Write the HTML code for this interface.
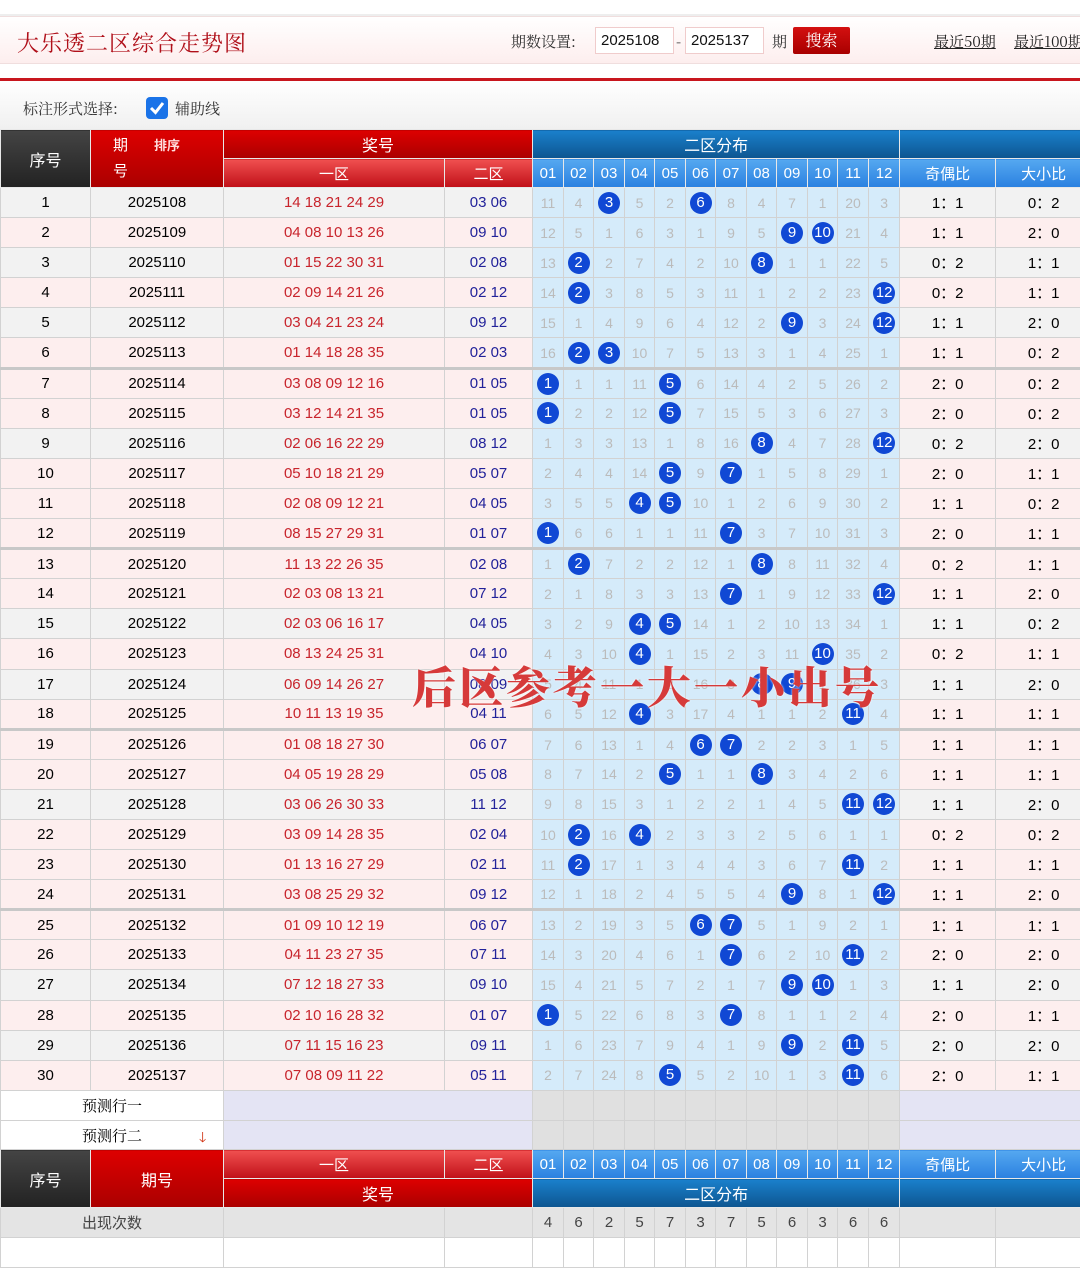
<!DOCTYPE html>
<html><head><meta charset="utf-8">
<style>
*{box-sizing:border-box;margin:0;padding:0}
html,body{width:1080px;height:1245px;overflow:hidden;background:#fff;font-family:"Liberation Sans","Noto Sans CJK SC",sans-serif}
.top{position:absolute;left:0;top:0;width:1080px;height:16px;border-bottom:2px solid #eee}
.hd{position:absolute;left:0;top:16px;width:1080px;height:48px;background:linear-gradient(#fff,#fdeeee);border-top:1px solid #f0dede;border-bottom:1px solid #f0dede}
.title{position:absolute;left:17px;top:27px;font-family:"Noto Serif CJK SC",serif;font-size:22px;color:#b0101a;letter-spacing:1px}
.lbl{position:absolute;top:31px;font-size:15px;color:#333;font-family:"Noto Serif CJK SC",serif}
.inp{position:absolute;top:27px;height:27px;width:79px;border:1px solid #f0cccc;background:#fff;font-size:15px;padding:4px 0 0 5px;color:#111}
.btn{position:absolute;left:793px;top:27px;width:57px;height:27px;background:linear-gradient(#d41010,#a80000);border-radius:2px;color:#fff;font-size:16px;text-align:center;line-height:26px;font-family:"Noto Serif CJK SC",serif}
.lnk{position:absolute;top:31px;font-size:15px;color:#222;text-decoration:underline;font-family:"Noto Serif CJK SC",serif;white-space:nowrap}
.redline{position:absolute;left:0;top:78px;width:1080px;height:3px;background:#c8161e}
.opt{position:absolute;left:0;top:81px;width:1080px;height:48px;background:linear-gradient(#fff,#f0f0f0)}
.opt span{position:absolute;top:17px;font-size:15px;color:#333;font-family:"Noto Serif CJK SC",serif}
.chk{position:absolute;left:146px;top:97px;width:22px;height:22px;background:#1a73e8;border-radius:4px}
table{position:absolute;left:0;border-collapse:collapse;table-layout:fixed;width:1083px}
td,th{border:1px solid #d2d2d2;text-align:center;font-weight:normal;font-size:15px;white-space:nowrap;overflow:hidden;padding:0}
#t{top:129px}
th{color:#fff;height:29px;border-color:#e8e8e8}
.dk{background:linear-gradient(#444,#222)}
.rd{background:linear-gradient(#d00,#a00)}
.rd2{background:linear-gradient(#f05050,#c01018)}
.bl{background:linear-gradient(#1a80cc,#0d5590)}
.bl2{background:linear-gradient(#55a8f0,#2a80e0)}
tr.r td{height:30.1px}
tr.r td:nth-child(3){color:#c8242c}
tr.r td:nth-child(4){color:#22229a}
td.d{background:#d5ebfa;color:#bbb;font-size:14px}
tr.p td{background:#fdeeee}
tr.g td{background:#f2f2f2}
tr.r td.d{background:#d5ebfa}
tr.s td{border-bottom:3px solid #c8c8c8}
i{display:inline-block;width:22px;height:22px;border-radius:50%;background:#1048d4;color:#fff;font-style:normal;line-height:22px;font-size:15px;vertical-align:middle}
.pr td{height:29.8px}
.w{background:#fff!important}
.lv{background:#e4e4f4}
.gy{background:#e0e0e0}
.cnt td{background:#e4e4e4;color:#444;height:30px}
.ov{position:absolute;left:412px;top:648px;font-family:"Noto Serif CJK SC",serif;font-weight:900;font-size:44px;color:#d63a3a;letter-spacing:3px;text-shadow:0 0 2px #fff;white-space:nowrap}
</style></head><body>
<div class="top"></div>
<div class="hd"></div>
<div class="title">大乐透二区综合走势图</div>
<div class="lbl" style="left:511px">期数设置:</div>
<div class="inp" style="left:595px">2025108</div>
<div class="lbl" style="left:676px">-</div>
<div class="inp" style="left:685px">2025137</div>
<div class="lbl" style="left:772px">期</div>
<div class="btn">搜索</div>
<div class="lnk" style="left:934px">最近50期</div>
<div class="lnk" style="left:1014px">最近100期</div>
<div class="redline"></div>
<div class="opt"><span style="left:23px">标注形式选择:</span><span style="left:175px">辅助线</span></div>
<div class="chk"><svg width="22" height="22"><path d="M5 11 L9.5 15.5 L17 6" stroke="#fff" stroke-width="3" fill="none"/></svg></div>
<table id="t">
<colgroup><col style="width:90px"><col style="width:133px"><col style="width:221px"><col style="width:88px"><col style="width:31px"><col style="width:30px"><col style="width:31px"><col style="width:30px"><col style="width:31px"><col style="width:30px"><col style="width:31px"><col style="width:30px"><col style="width:31px"><col style="width:30px"><col style="width:31px"><col style="width:31px"><col style="width:96px"><col style="width:96px"></colgroup>
<tr><th rowspan="2" class="dk" style="font-size:16px">序号</th><th rowspan="2" class="rd" style="font-size:15px;text-align:left;padding-left:22px;line-height:26px">期<span style="font-size:13px;color:#fdd;margin-left:26px;font-weight:bold">排序</span><br>号</th><th colspan="2" class="rd" style="font-size:16px">奖号</th><th colspan="12" class="bl" style="font-size:16px">二区分布</th><th colspan="2" class="bl"></th></tr>
<tr><th class="rd2">一区</th><th class="rd2">二区</th><th class="bl2">01</th><th class="bl2">02</th><th class="bl2">03</th><th class="bl2">04</th><th class="bl2">05</th><th class="bl2">06</th><th class="bl2">07</th><th class="bl2">08</th><th class="bl2">09</th><th class="bl2">10</th><th class="bl2">11</th><th class="bl2">12</th><th class="bl2">奇偶比</th><th class="bl2">大小比</th></tr>
<tr class="r g"><td>1</td><td>2025108</td><td>14 18 21 24 29</td><td>03 06</td><td class="d">11</td><td class="d">4</td><td class="d"><i>3</i></td><td class="d">5</td><td class="d">2</td><td class="d"><i>6</i></td><td class="d">8</td><td class="d">4</td><td class="d">7</td><td class="d">1</td><td class="d">20</td><td class="d">3</td><td>1：1</td><td>0：2</td></tr>
<tr class="r p"><td>2</td><td>2025109</td><td>04 08 10 13 26</td><td>09 10</td><td class="d">12</td><td class="d">5</td><td class="d">1</td><td class="d">6</td><td class="d">3</td><td class="d">1</td><td class="d">9</td><td class="d">5</td><td class="d"><i>9</i></td><td class="d"><i>10</i></td><td class="d">21</td><td class="d">4</td><td>1：1</td><td>2：0</td></tr>
<tr class="r g"><td>3</td><td>2025110</td><td>01 15 22 30 31</td><td>02 08</td><td class="d">13</td><td class="d"><i>2</i></td><td class="d">2</td><td class="d">7</td><td class="d">4</td><td class="d">2</td><td class="d">10</td><td class="d"><i>8</i></td><td class="d">1</td><td class="d">1</td><td class="d">22</td><td class="d">5</td><td>0：2</td><td>1：1</td></tr>
<tr class="r p"><td>4</td><td>2025111</td><td>02 09 14 21 26</td><td>02 12</td><td class="d">14</td><td class="d"><i>2</i></td><td class="d">3</td><td class="d">8</td><td class="d">5</td><td class="d">3</td><td class="d">11</td><td class="d">1</td><td class="d">2</td><td class="d">2</td><td class="d">23</td><td class="d"><i>12</i></td><td>0：2</td><td>1：1</td></tr>
<tr class="r g"><td>5</td><td>2025112</td><td>03 04 21 23 24</td><td>09 12</td><td class="d">15</td><td class="d">1</td><td class="d">4</td><td class="d">9</td><td class="d">6</td><td class="d">4</td><td class="d">12</td><td class="d">2</td><td class="d"><i>9</i></td><td class="d">3</td><td class="d">24</td><td class="d"><i>12</i></td><td>1：1</td><td>2：0</td></tr>
<tr class="r p s"><td>6</td><td>2025113</td><td>01 14 18 28 35</td><td>02 03</td><td class="d">16</td><td class="d"><i>2</i></td><td class="d"><i>3</i></td><td class="d">10</td><td class="d">7</td><td class="d">5</td><td class="d">13</td><td class="d">3</td><td class="d">1</td><td class="d">4</td><td class="d">25</td><td class="d">1</td><td>1：1</td><td>0：2</td></tr>
<tr class="r p"><td>7</td><td>2025114</td><td>03 08 09 12 16</td><td>01 05</td><td class="d"><i>1</i></td><td class="d">1</td><td class="d">1</td><td class="d">11</td><td class="d"><i>5</i></td><td class="d">6</td><td class="d">14</td><td class="d">4</td><td class="d">2</td><td class="d">5</td><td class="d">26</td><td class="d">2</td><td>2：0</td><td>0：2</td></tr>
<tr class="r p"><td>8</td><td>2025115</td><td>03 12 14 21 35</td><td>01 05</td><td class="d"><i>1</i></td><td class="d">2</td><td class="d">2</td><td class="d">12</td><td class="d"><i>5</i></td><td class="d">7</td><td class="d">15</td><td class="d">5</td><td class="d">3</td><td class="d">6</td><td class="d">27</td><td class="d">3</td><td>2：0</td><td>0：2</td></tr>
<tr class="r g"><td>9</td><td>2025116</td><td>02 06 16 22 29</td><td>08 12</td><td class="d">1</td><td class="d">3</td><td class="d">3</td><td class="d">13</td><td class="d">1</td><td class="d">8</td><td class="d">16</td><td class="d"><i>8</i></td><td class="d">4</td><td class="d">7</td><td class="d">28</td><td class="d"><i>12</i></td><td>0：2</td><td>2：0</td></tr>
<tr class="r p"><td>10</td><td>2025117</td><td>05 10 18 21 29</td><td>05 07</td><td class="d">2</td><td class="d">4</td><td class="d">4</td><td class="d">14</td><td class="d"><i>5</i></td><td class="d">9</td><td class="d"><i>7</i></td><td class="d">1</td><td class="d">5</td><td class="d">8</td><td class="d">29</td><td class="d">1</td><td>2：0</td><td>1：1</td></tr>
<tr class="r p"><td>11</td><td>2025118</td><td>02 08 09 12 21</td><td>04 05</td><td class="d">3</td><td class="d">5</td><td class="d">5</td><td class="d"><i>4</i></td><td class="d"><i>5</i></td><td class="d">10</td><td class="d">1</td><td class="d">2</td><td class="d">6</td><td class="d">9</td><td class="d">30</td><td class="d">2</td><td>1：1</td><td>0：2</td></tr>
<tr class="r p s"><td>12</td><td>2025119</td><td>08 15 27 29 31</td><td>01 07</td><td class="d"><i>1</i></td><td class="d">6</td><td class="d">6</td><td class="d">1</td><td class="d">1</td><td class="d">11</td><td class="d"><i>7</i></td><td class="d">3</td><td class="d">7</td><td class="d">10</td><td class="d">31</td><td class="d">3</td><td>2：0</td><td>1：1</td></tr>
<tr class="r p"><td>13</td><td>2025120</td><td>11 13 22 26 35</td><td>02 08</td><td class="d">1</td><td class="d"><i>2</i></td><td class="d">7</td><td class="d">2</td><td class="d">2</td><td class="d">12</td><td class="d">1</td><td class="d"><i>8</i></td><td class="d">8</td><td class="d">11</td><td class="d">32</td><td class="d">4</td><td>0：2</td><td>1：1</td></tr>
<tr class="r p"><td>14</td><td>2025121</td><td>02 03 08 13 21</td><td>07 12</td><td class="d">2</td><td class="d">1</td><td class="d">8</td><td class="d">3</td><td class="d">3</td><td class="d">13</td><td class="d"><i>7</i></td><td class="d">1</td><td class="d">9</td><td class="d">12</td><td class="d">33</td><td class="d"><i>12</i></td><td>1：1</td><td>2：0</td></tr>
<tr class="r g"><td>15</td><td>2025122</td><td>02 03 06 16 17</td><td>04 05</td><td class="d">3</td><td class="d">2</td><td class="d">9</td><td class="d"><i>4</i></td><td class="d"><i>5</i></td><td class="d">14</td><td class="d">1</td><td class="d">2</td><td class="d">10</td><td class="d">13</td><td class="d">34</td><td class="d">1</td><td>1：1</td><td>0：2</td></tr>
<tr class="r p"><td>16</td><td>2025123</td><td>08 13 24 25 31</td><td>04 10</td><td class="d">4</td><td class="d">3</td><td class="d">10</td><td class="d"><i>4</i></td><td class="d">1</td><td class="d">15</td><td class="d">2</td><td class="d">3</td><td class="d">11</td><td class="d"><i>10</i></td><td class="d">35</td><td class="d">2</td><td>0：2</td><td>1：1</td></tr>
<tr class="r g"><td>17</td><td>2025124</td><td>06 09 14 26 27</td><td>08 09</td><td class="d">5</td><td class="d">4</td><td class="d">11</td><td class="d">1</td><td class="d">2</td><td class="d">16</td><td class="d">3</td><td class="d"><i>8</i></td><td class="d"><i>9</i></td><td class="d">1</td><td class="d">36</td><td class="d">3</td><td>1：1</td><td>2：0</td></tr>
<tr class="r p s"><td>18</td><td>2025125</td><td>10 11 13 19 35</td><td>04 11</td><td class="d">6</td><td class="d">5</td><td class="d">12</td><td class="d"><i>4</i></td><td class="d">3</td><td class="d">17</td><td class="d">4</td><td class="d">1</td><td class="d">1</td><td class="d">2</td><td class="d"><i>11</i></td><td class="d">4</td><td>1：1</td><td>1：1</td></tr>
<tr class="r p"><td>19</td><td>2025126</td><td>01 08 18 27 30</td><td>06 07</td><td class="d">7</td><td class="d">6</td><td class="d">13</td><td class="d">1</td><td class="d">4</td><td class="d"><i>6</i></td><td class="d"><i>7</i></td><td class="d">2</td><td class="d">2</td><td class="d">3</td><td class="d">1</td><td class="d">5</td><td>1：1</td><td>1：1</td></tr>
<tr class="r p"><td>20</td><td>2025127</td><td>04 05 19 28 29</td><td>05 08</td><td class="d">8</td><td class="d">7</td><td class="d">14</td><td class="d">2</td><td class="d"><i>5</i></td><td class="d">1</td><td class="d">1</td><td class="d"><i>8</i></td><td class="d">3</td><td class="d">4</td><td class="d">2</td><td class="d">6</td><td>1：1</td><td>1：1</td></tr>
<tr class="r g"><td>21</td><td>2025128</td><td>03 06 26 30 33</td><td>11 12</td><td class="d">9</td><td class="d">8</td><td class="d">15</td><td class="d">3</td><td class="d">1</td><td class="d">2</td><td class="d">2</td><td class="d">1</td><td class="d">4</td><td class="d">5</td><td class="d"><i>11</i></td><td class="d"><i>12</i></td><td>1：1</td><td>2：0</td></tr>
<tr class="r p"><td>22</td><td>2025129</td><td>03 09 14 28 35</td><td>02 04</td><td class="d">10</td><td class="d"><i>2</i></td><td class="d">16</td><td class="d"><i>4</i></td><td class="d">2</td><td class="d">3</td><td class="d">3</td><td class="d">2</td><td class="d">5</td><td class="d">6</td><td class="d">1</td><td class="d">1</td><td>0：2</td><td>0：2</td></tr>
<tr class="r p"><td>23</td><td>2025130</td><td>01 13 16 27 29</td><td>02 11</td><td class="d">11</td><td class="d"><i>2</i></td><td class="d">17</td><td class="d">1</td><td class="d">3</td><td class="d">4</td><td class="d">4</td><td class="d">3</td><td class="d">6</td><td class="d">7</td><td class="d"><i>11</i></td><td class="d">2</td><td>1：1</td><td>1：1</td></tr>
<tr class="r p s"><td>24</td><td>2025131</td><td>03 08 25 29 32</td><td>09 12</td><td class="d">12</td><td class="d">1</td><td class="d">18</td><td class="d">2</td><td class="d">4</td><td class="d">5</td><td class="d">5</td><td class="d">4</td><td class="d"><i>9</i></td><td class="d">8</td><td class="d">1</td><td class="d"><i>12</i></td><td>1：1</td><td>2：0</td></tr>
<tr class="r p"><td>25</td><td>2025132</td><td>01 09 10 12 19</td><td>06 07</td><td class="d">13</td><td class="d">2</td><td class="d">19</td><td class="d">3</td><td class="d">5</td><td class="d"><i>6</i></td><td class="d"><i>7</i></td><td class="d">5</td><td class="d">1</td><td class="d">9</td><td class="d">2</td><td class="d">1</td><td>1：1</td><td>1：1</td></tr>
<tr class="r p"><td>26</td><td>2025133</td><td>04 11 23 27 35</td><td>07 11</td><td class="d">14</td><td class="d">3</td><td class="d">20</td><td class="d">4</td><td class="d">6</td><td class="d">1</td><td class="d"><i>7</i></td><td class="d">6</td><td class="d">2</td><td class="d">10</td><td class="d"><i>11</i></td><td class="d">2</td><td>2：0</td><td>2：0</td></tr>
<tr class="r g"><td>27</td><td>2025134</td><td>07 12 18 27 33</td><td>09 10</td><td class="d">15</td><td class="d">4</td><td class="d">21</td><td class="d">5</td><td class="d">7</td><td class="d">2</td><td class="d">1</td><td class="d">7</td><td class="d"><i>9</i></td><td class="d"><i>10</i></td><td class="d">1</td><td class="d">3</td><td>1：1</td><td>2：0</td></tr>
<tr class="r p"><td>28</td><td>2025135</td><td>02 10 16 28 32</td><td>01 07</td><td class="d"><i>1</i></td><td class="d">5</td><td class="d">22</td><td class="d">6</td><td class="d">8</td><td class="d">3</td><td class="d"><i>7</i></td><td class="d">8</td><td class="d">1</td><td class="d">1</td><td class="d">2</td><td class="d">4</td><td>2：0</td><td>1：1</td></tr>
<tr class="r g"><td>29</td><td>2025136</td><td>07 11 15 16 23</td><td>09 11</td><td class="d">1</td><td class="d">6</td><td class="d">23</td><td class="d">7</td><td class="d">9</td><td class="d">4</td><td class="d">1</td><td class="d">9</td><td class="d"><i>9</i></td><td class="d">2</td><td class="d"><i>11</i></td><td class="d">5</td><td>2：0</td><td>2：0</td></tr>
<tr class="r p"><td>30</td><td>2025137</td><td>07 08 09 11 22</td><td>05 11</td><td class="d">2</td><td class="d">7</td><td class="d">24</td><td class="d">8</td><td class="d"><i>5</i></td><td class="d">5</td><td class="d">2</td><td class="d">10</td><td class="d">1</td><td class="d">3</td><td class="d"><i>11</i></td><td class="d">6</td><td>2：0</td><td>1：1</td></tr>
<tr class="pr"><td colspan="2" class="w" style="font-family:'Noto Serif CJK SC',serif">预测行一</td><td colspan="2" class="lv"></td><td class="gy"></td><td class="gy"></td><td class="gy"></td><td class="gy"></td><td class="gy"></td><td class="gy"></td><td class="gy"></td><td class="gy"></td><td class="gy"></td><td class="gy"></td><td class="gy"></td><td class="gy"></td><td colspan="2" class="lv"></td></tr>
<tr class="pr"><td colspan="2" class="w" style="font-family:'Noto Serif CJK SC',serif;position:relative">预测行二<span style="position:absolute;left:198px;top:6px;color:#d03010;font-size:14px">🡓</span></td><td colspan="2" class="lv"></td><td class="gy"></td><td class="gy"></td><td class="gy"></td><td class="gy"></td><td class="gy"></td><td class="gy"></td><td class="gy"></td><td class="gy"></td><td class="gy"></td><td class="gy"></td><td class="gy"></td><td class="gy"></td><td colspan="2" class="lv"></td></tr>
<tr><th rowspan="2" class="dk" style="font-size:16px">序号</th><th rowspan="2" class="rd" style="font-size:16px">期号</th><th class="rd2">一区</th><th class="rd2">二区</th><th class="bl2">01</th><th class="bl2">02</th><th class="bl2">03</th><th class="bl2">04</th><th class="bl2">05</th><th class="bl2">06</th><th class="bl2">07</th><th class="bl2">08</th><th class="bl2">09</th><th class="bl2">10</th><th class="bl2">11</th><th class="bl2">12</th><th class="bl2">奇偶比</th><th class="bl2">大小比</th></tr>
<tr><th colspan="2" class="rd" style="font-size:16px">奖号</th><th colspan="12" class="bl" style="font-size:16px">二区分布</th><th colspan="2" class="bl"></th></tr>
<tr class="cnt"><td colspan="2">出现次数</td><td></td><td></td><td>4</td><td>6</td><td>2</td><td>5</td><td>7</td><td>3</td><td>7</td><td>5</td><td>6</td><td>3</td><td>6</td><td>6</td><td></td><td></td></tr>
<tr><td colspan="2" style="height:30px"></td><td></td><td></td><td></td><td></td><td></td><td></td><td></td><td></td><td></td><td></td><td></td><td></td><td></td><td></td><td></td><td></td></tr>
</table>
<div class="ov" style="top:652px">后区参考一大一小出号</div>
</body></html>
